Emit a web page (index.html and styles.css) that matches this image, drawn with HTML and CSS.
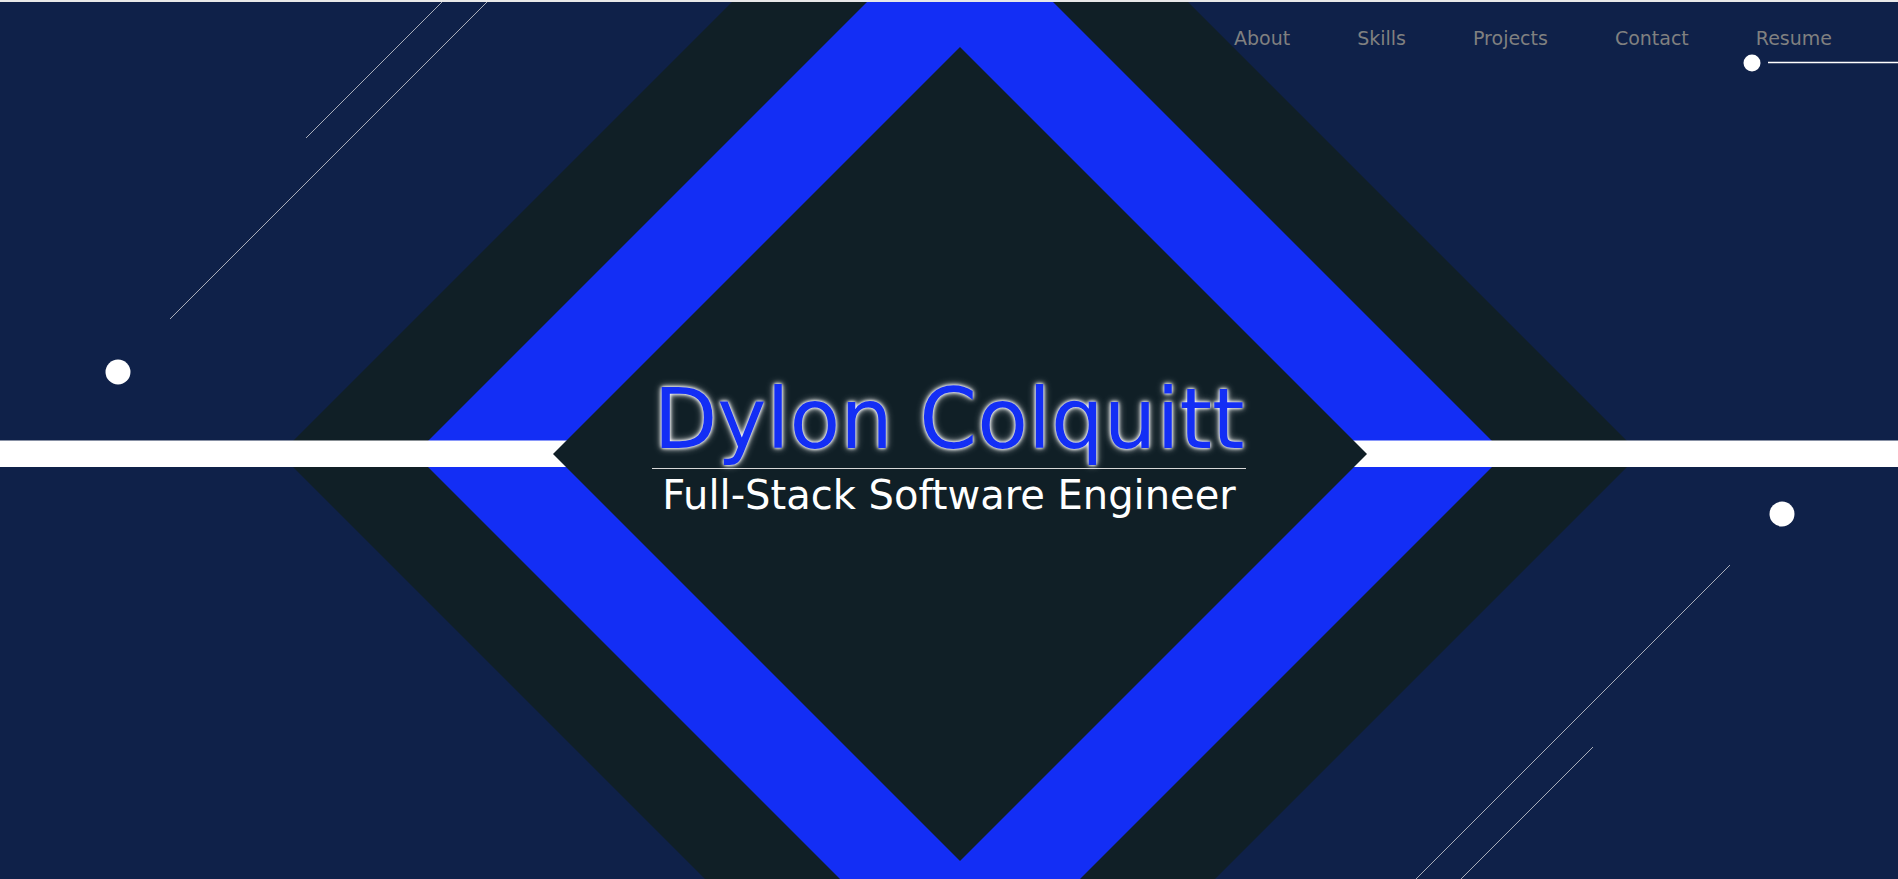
FILE: index.html
```html
<!DOCTYPE html>
<html lang="en">
<head>
<meta charset="utf-8">
<title>Dylon Colquitt</title>
<link rel="stylesheet" href="styles.css">
</head>
<body>
<header class="hero">
  <svg class="backdrop" viewBox="0 2 1898 877" preserveAspectRatio="none" aria-hidden="true">
    <polygon class="shape-dark" points="960,-226 1640,454 960,1134 280,454"/>
    <polygon class="shape-blue" points="960,-91 1505,454 960,999 415,454"/>
    <rect class="band" x="0" y="440.5" width="1898" height="26.5"/>
    <polygon class="shape-dark" points="960,47 1367,454 960,861 553,454"/>
    <line class="streak" x1="444" y1="0" x2="306" y2="138"/>
    <line class="streak" x1="489" y1="0" x2="170" y2="319"/>
    <line class="streak" x1="1730" y1="565" x2="1414" y2="881"/>
    <line class="streak" x1="1593" y1="747" x2="1459" y2="881"/>
    <circle class="dot" cx="118" cy="372" r="12.5"/>
    <circle class="dot" cx="1782" cy="514" r="12.5"/>
    <circle class="dot" cx="1752" cy="63" r="8.5"/>
    <line class="rule" x1="1768" y1="62.5" x2="1898" y2="62.5"/>
  </svg>
  <nav class="nav">
    <a class="nav-link" href="#about">About</a>
    <a class="nav-link" href="#skills">Skills</a>
    <a class="nav-link" href="#projects">Projects</a>
    <a class="nav-link" href="#contact">Contact</a>
    <a class="nav-link" href="#resume">Resume</a>
  </nav>
  <div class="intro">
    <h1 class="name">Dylon Colquitt</h1>
    <p class="role">Full-Stack Software Engineer</p>
  </div>
</header>
</body>
</html>
```

FILE: styles.css
```css
html, body {
  margin: 0;
  padding: 0;
}

body {
  background: #e8e8e8;
  font-family: "DejaVu Sans", sans-serif;
  overflow: hidden;
}

.hero {
  position: relative;
  margin-top: 2px;
  height: 877px;
  background: #0f2149;
  overflow: hidden;
  display: flex;
  flex-direction: column;
}

.backdrop {
  position: absolute;
  left: 0;
  top: 0;
  width: 100%;
  height: 100%;
}

.shape-dark { fill: #101f26; }
.shape-blue { fill: #132ef5; }
.band { fill: #ffffff; }
.streak { stroke: #a8adb9; stroke-width: 1; }
.dot { fill: #ffffff; }
.rule { stroke: #ffffff; stroke-width: 1.5; }

.nav {
  position: relative;
  display: flex;
  justify-content: flex-end;
  gap: 67px;
  padding: 25px 66px 0 0;
}

.nav-link {
  color: #808080;
  font-size: 19px;
  line-height: 22px;
  text-decoration: none;
}

.intro {
  position: relative;
  align-self: center;
  margin-top: 322px;
  display: flex;
  flex-direction: column;
  align-items: center;
}

.name {
  margin: 0;
  padding: 0 1px;
  font-size: 83px;
  font-weight: normal;
  color: #132ef5;
  text-shadow: 0 0 3px #ffffff, 0 0 5px #ffffff, 0 0 9px rgba(255, 255, 255, 0.6);
  border-bottom: 1px solid #d8d8d8;
}

.role {
  margin: 3px 0 0;
  font-size: 40px;
  color: #ffffff;
}
```
